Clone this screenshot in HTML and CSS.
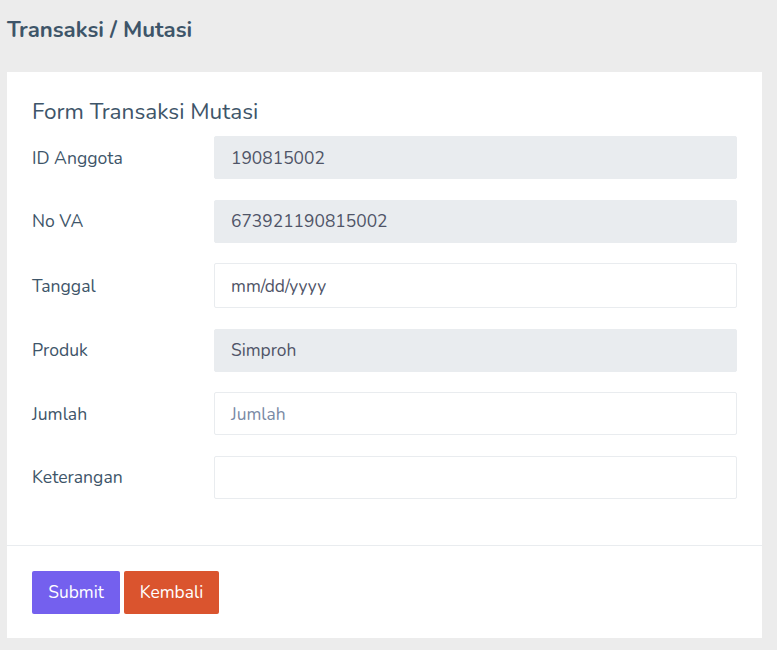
FILE: index.html
```html
<!DOCTYPE html>
<html lang="id">
<head>
<meta charset="utf-8">
<title>Transaksi / Mutasi</title>
<link rel="stylesheet" href="styles.css">
</head>
<body>
<div class="page">
  <h4 class="page-title">Transaksi / Mutasi</h4>
  <div class="card">
    <div class="card-body">
      <h4 class="card-title">Form Transaksi Mutasi</h4>
      <div class="form-row">
        <label class="form-label">ID Anggota</label>
        <div class="form-control disabled">190815002</div>
      </div>
      <div class="form-row">
        <label class="form-label">No VA</label>
        <div class="form-control disabled">673921190815002</div>
      </div>
      <div class="form-row">
        <label class="form-label">Tanggal</label>
        <div class="form-control date">mm/dd/yyyy</div>
      </div>
      <div class="form-row">
        <label class="form-label">Produk</label>
        <div class="form-control disabled">Simproh</div>
      </div>
      <div class="form-row">
        <label class="form-label">Jumlah</label>
        <div class="form-control placeholder">Jumlah</div>
      </div>
      <div class="form-row">
        <label class="form-label">Keterangan</label>
        <div class="form-control"></div>
      </div>
    </div>
    <div class="card-footer">
      <button class="btn btn-primary">Submit</button>
      <button class="btn btn-danger">Kembali</button>
    </div>
  </div>
</div>
</body>
</html>
```
FILE: styles.css
```css
* { box-sizing: border-box; }
html, body { margin: 0; padding: 0; }
body {
  background: #ececec;
  font-family: "Nunito", Lato, "Liberation Sans", sans-serif;
  color: #3e5569;
  width: 777px;
  height: 650px;
  overflow: hidden;
}
.page { padding: 14px 15px 0 7px; }
.page-title {
  margin: 0;
  height: 32px;
  line-height: 32px;
  font-size: 22.2px;
  font-weight: 700;
  color: #3e5569;
}
.card {
  margin-top: 26px;
  background: #fff;
  width: 755px;
}
.card-body { padding: 26px 25px 25px 25px; }
.card-title {
  margin: 0 0 10px 0;
  font-size: 22.6px;
  font-weight: 400;
  line-height: 28px;
  color: #3e5569;
}
.form-row {
  display: grid;
  grid-template-columns: 182px 1fr;
  align-items: center;
  margin-bottom: 20.5px;
}
.form-row:last-child { margin-bottom: 21px; }
.form-label { font-size: 17.6px; color: #3e5569; }
.form-control {
  height: 43px;
  border: 1px solid #e9ecef;
  border-radius: 2px;
  padding: 0 16px;
  display: flex;
  align-items: center;
  font-size: 17.4px;
  color: #4f5467;
  background: #fff;
}
.form-control.disabled { background: #e9ecef; }
.form-control.date { height: 45px; }
.form-control.placeholder { color: #7a8aa5; }
.card-footer {
  border-top: 1px solid #e9ecef;
  padding: 25px 25px 24px 25px;
  display: flex;
  gap: 4px;
}
.btn {
  font-family: inherit;
  font-size: 17.4px;
  color: #fff;
  border: none;
  border-radius: 2px;
  height: 43px;
  padding: 0 12px;
  cursor: pointer;
}
.btn-primary { background: #7460ee; width: 88px; }
.btn-danger { background: #da542e; width: 95px; }
```
